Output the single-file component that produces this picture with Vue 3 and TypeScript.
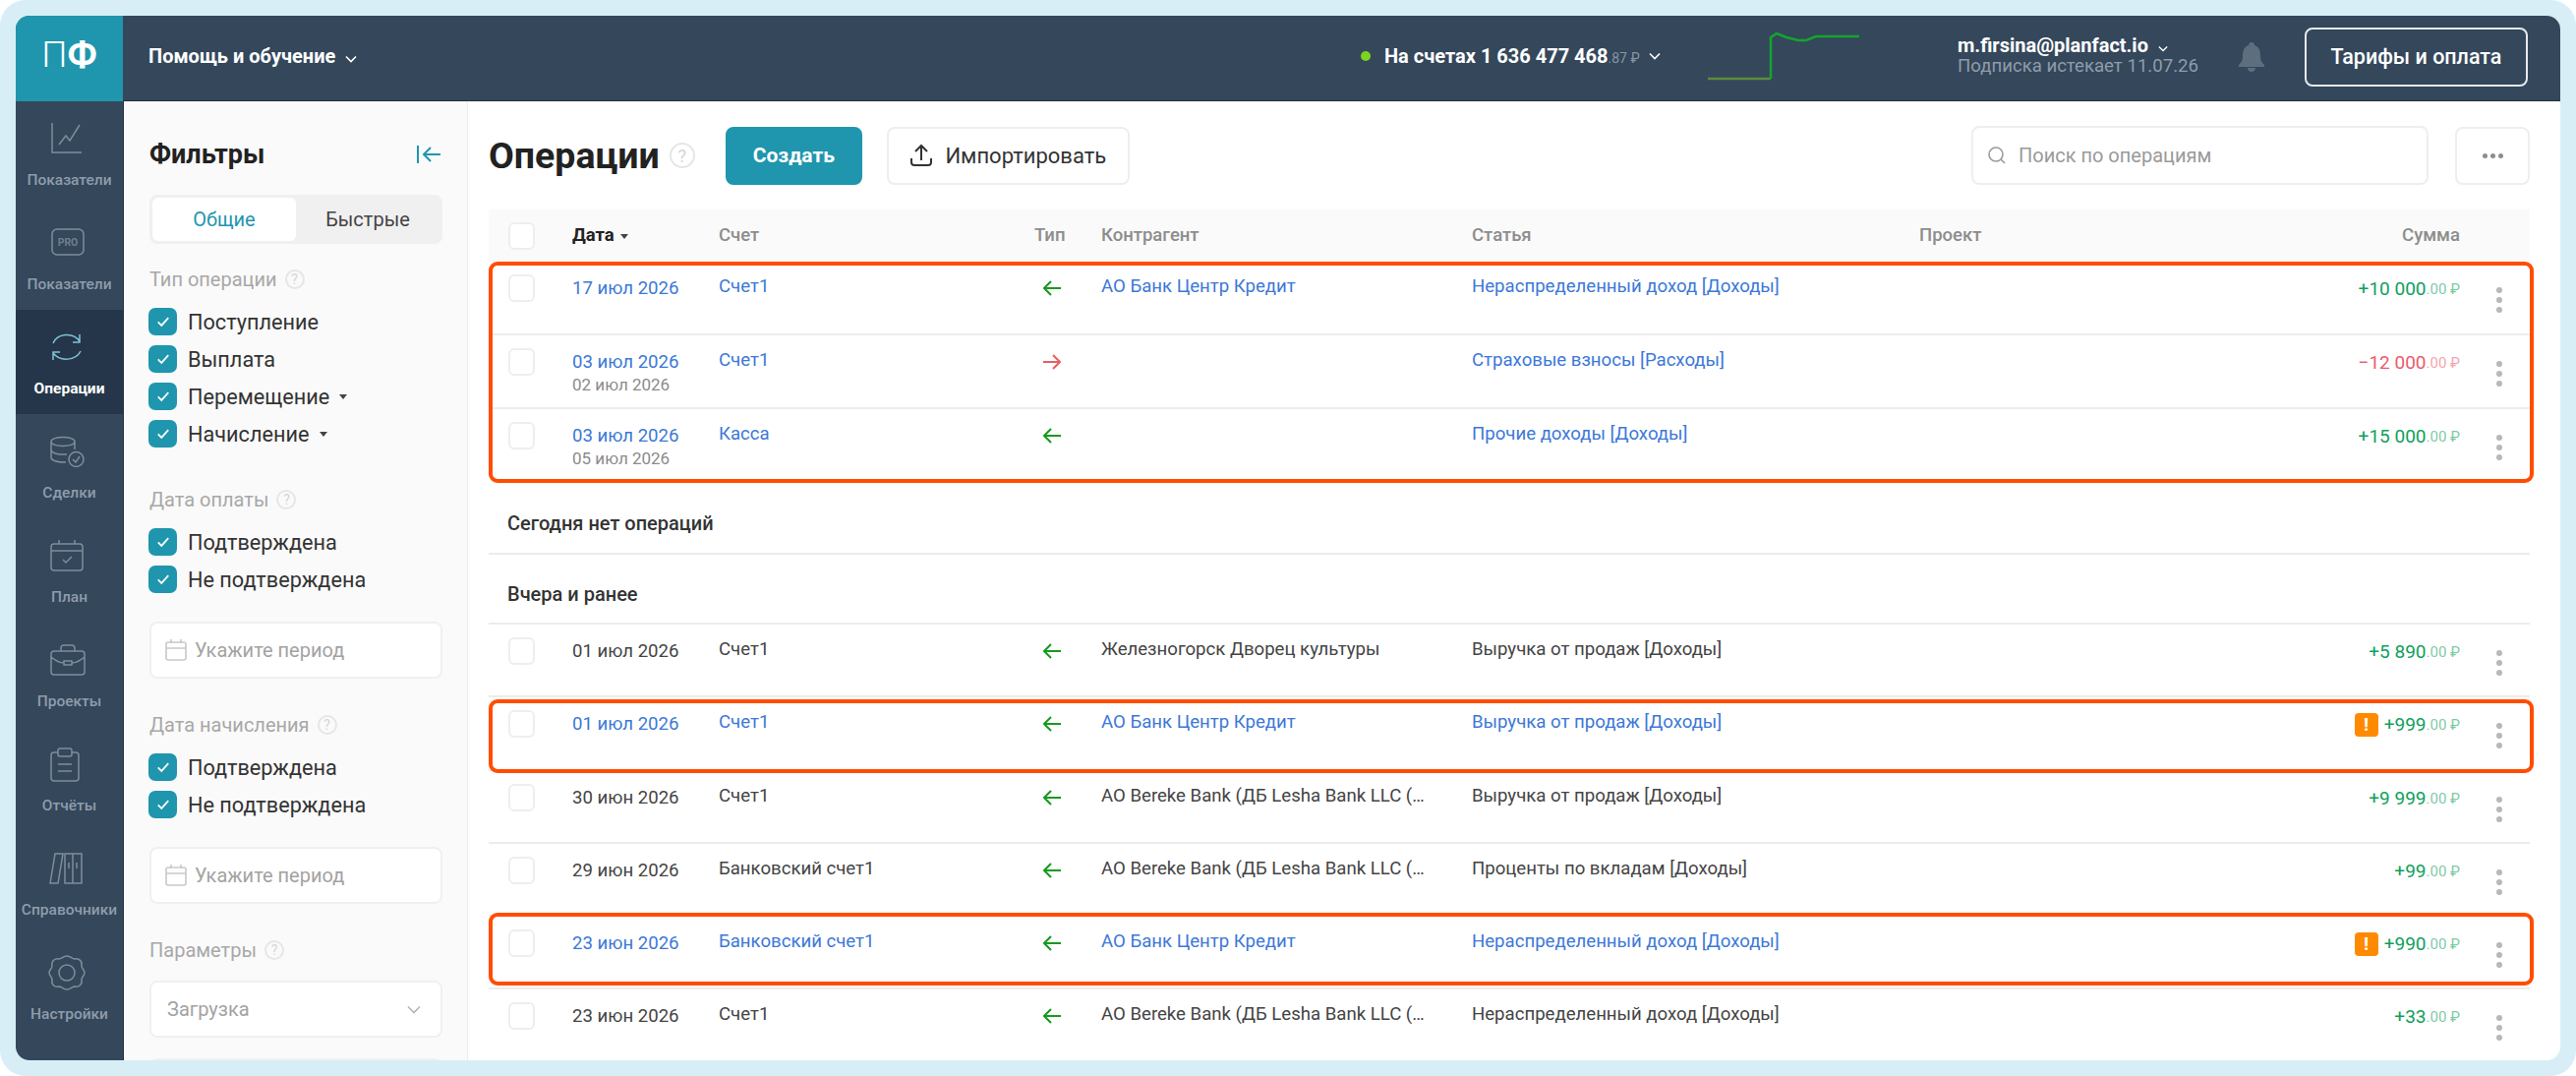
<script setup lang="ts">
interface NavItem {
  label: string
  d: string
  active?: boolean
  pro?: boolean
}

interface Row {
  date: string
  paid?: string
  account: string
  out?: boolean
  party?: string
  article: string
  sum: string
  warn?: boolean
  link?: boolean
}

const nav: NavItem[] = [
  { label: 'Показатели', d: 'M3 2V32H33M10 24L17 15L21 20L31 4' },
  { label: 'Показатели', d: 'M8 4H30A5 5 0 0 1 35 9V25A5 5 0 0 1 30 30H8A5 5 0 0 1 3 25V9A5 5 0 0 1 8 4Z', pro: true },
  { label: 'Операции', d: 'M4 14C8 4 24 2 31 12M31 5V13H24M32 22C27 32 11 33 4 24M4 31V23H11', active: true },
  { label: 'Сделки', d: 'M2 8C2 2 26 2 26 8C26 14 2 14 2 8ZM2 8V24C2 27 8 29 17 29M2 16C2 20 10 21.500 18 21M26 8V16M35 26A7.500 7.500 0 1 1 20 26A7.500 7.500 0 0 1 35 26ZM24 26L27 29L31 23' },
  { label: 'План', d: 'M5 6H31A3 3 0 0 1 34 9V30A3 3 0 0 1 31 33H5A3 3 0 0 1 2 30V9A3 3 0 0 1 5 6ZM2 13H34M10 2V6M26 2V6M14 22L17 25L23 19' },
  { label: 'Проекты', d: 'M5 9H33A3 3 0 0 1 36 12V30A3 3 0 0 1 33 33H5A3 3 0 0 1 2 30V12A3 3 0 0 1 5 9ZM12 9V6A3 3 0 0 1 15 3H23A3 3 0 0 1 26 6V9M2 15C8 20 13 21 15 21M36 15C30 20 25 21 23 21M15 19H23V23H15Z' },
  { label: 'Отчёты', d: 'M9 6H5A3 3 0 0 0 2 9V32A3 3 0 0 0 5 35H27A3 3 0 0 0 30 32V9A3 3 0 0 0 27 6H23M11 2H21A2 2 0 0 1 23 4V8A2 2 0 0 1 21 10H11A2 2 0 0 1 9 8V4A2 2 0 0 1 11 2ZM9 18H23M9 25H23' },
  { label: 'Справочники', d: 'M6 3H14L9 33H1ZM16 3H24V33H16ZM24 3H33V33H24ZM20 12V18M28 12V18' },
  { label: 'Настройки', d: 'M18 1C22 1 23 4 26 4C31 3 34 7 33 11C33 14 36 15 36 18C36 21 33 22 33 25C34 30 30 33 26 32C23 32 22 35 18 35C14 35 13 32 10 32C5 33 2 30 3 25C3 22 0 21 0 18C0 15 3 14 3 11C2 6 6 3 10 4C13 4 14 1 18 1ZM26 18A8 8 0 1 1 10 18A8 8 0 0 1 26 18Z' },
]

const typeChecks = [
  { label: 'Поступление' },
  { label: 'Выплата' },
  { label: 'Перемещение', caret: true },
  { label: 'Начисление', caret: true },
]

const payChecks = ['Подтверждена', 'Не подтверждена']

const bankCentre = 'АО Банк Центр Кредит'
const bereke = 'АО Bereke Bank (ДБ Lesha Bank LLC (…'

const newRows: Row[] = [
  { date: '17 июл 2026', account: 'Счет1', party: bankCentre, article: 'Нераспределенный доход [Доходы]', sum: '+10 000', link: true },
  { date: '03 июл 2026', paid: '02 июл 2026', account: 'Счет1', out: true, article: 'Страховые взносы [Расходы]', sum: '−12 000', link: true },
  { date: '03 июл 2026', paid: '05 июл 2026', account: 'Касса', article: 'Прочие доходы [Доходы]', sum: '+15 000', link: true },
]

const oldRows: Row[] = [
  { date: '01 июл 2026', account: 'Счет1', party: 'Железногорск Дворец культуры', article: 'Выручка от продаж [Доходы]', sum: '+5 890' },
  { date: '01 июл 2026', account: 'Счет1', party: bankCentre, article: 'Выручка от продаж [Доходы]', sum: '+999', warn: true, link: true },
  { date: '30 июн 2026', account: 'Счет1', party: bereke, article: 'Выручка от продаж [Доходы]', sum: '+9 999' },
  { date: '29 июн 2026', account: 'Банковский счет1', party: bereke, article: 'Проценты по вкладам [Доходы]', sum: '+99' },
  { date: '23 июн 2026', account: 'Банковский счет1', party: bankCentre, article: 'Нераспределенный доход [Доходы]', sum: '+990', warn: true, link: true },
  { date: '23 июн 2026', account: 'Счет1', party: bereke, article: 'Нераспределенный доход [Доходы]', sum: '+33' },
]
</script>

<template>
  <div class="canvas">
    <div class="app">
      <header class="topbar">
        <div class="logo"><span class="logo-p">П</span><span class="logo-f">Ф</span></div>
        <div class="help">
          Помощь и обучение
          <svg class="chev" width="12" height="8" viewBox="0 0 12 8"><path d="M1 1.500L6 6.500L11 1.500" /></svg>
        </div>
        <div class="balance">
          <span class="dot"></span>
          <span class="balance-text">На счетах 1 636 477 468</span><span class="balance-cents">.87 ₽</span>
          <svg class="chev wide" width="12" height="8" viewBox="0 0 12 8"><path d="M1 1.500L6 6.500L11 1.500" /></svg>
        </div>
        <svg class="spark" width="156" height="52" viewBox="0 0 156 52" fill="none">
          <path d="M0 48H64" stroke="#5f8a3c" stroke-width="2.500" />
          <path d="M64 48V6L70 2L80 6L92 9L100 9L110 5H154" stroke="#12a52c" stroke-width="2.500" />
        </svg>
        <div class="user">
          <div class="user-mail">
            m.firsina@planfact.io
            <svg class="chev" width="10" height="7" viewBox="0 0 12 8"><path d="M1 1.500L6 6.500L11 1.500" /></svg>
          </div>
          <div class="user-sub">Подписка истекает 11.07.26</div>
        </div>
        <svg class="bell" width="26" height="30" viewBox="0 0 26 30">
          <path d="M13 0C15 0 16 1.500 16 3C21 5 22 9 22 14C22 19 24 21 26 23V25H0V23C2 21 4 19 4 14C4 9 5 5 10 3C10 1.500 11 0 13 0ZM9 26H17C17 28.500 15 30 13 30C11 30 9 28.500 9 26Z" />
        </svg>
        <button class="pay" type="button">Тарифы и оплата</button>
      </header>

      <div class="body">
        <nav class="sidebar">
          <div v-for="(item, i) in nav" :key="i" class="nav-item" :class="{ active: item.active }">
            <svg class="nav-icon" width="38" height="36" viewBox="-1 0 38 36" fill="none">
              <path :d="item.d" />
              <text v-if="item.pro" x="19" y="21" text-anchor="middle" class="pro">PRO</text>
            </svg>
            <span class="nav-label">{{ item.label }}</span>
          </div>
        </nav>

        <aside class="filters">
          <div class="filters-head">
            <h2>Фильтры</h2>
            <svg width="26" height="22" viewBox="0 0 26 22" fill="none" stroke="#1f96ad" stroke-width="2">
              <path d="M2 2V20M25 11H9M15 4L8 11L15 18" />
            </svg>
          </div>
          <div class="tabs">
            <div class="tab on">Общие</div>
            <div class="tab">Быстрые</div>
          </div>

          <div class="f-label first">Тип операции <span class="q">?</span></div>
          <div class="checks">
            <div v-for="c in typeChecks" :key="c.label" class="check">
              <span class="box"><svg width="14" height="12" viewBox="0 0 16 13"><path d="M2 7L6 11L14 2" /></svg></span>
              {{ c.label }}
              <i v-if="c.caret" class="caret"></i>
            </div>
          </div>

          <div class="f-label">Дата оплаты <span class="q">?</span></div>
          <div class="checks">
            <div v-for="c in payChecks" :key="c" class="check">
              <span class="box"><svg width="14" height="12" viewBox="0 0 16 13"><path d="M2 7L6 11L14 2" /></svg></span>
              {{ c }}
            </div>
          </div>
          <div class="field period">
            <svg width="22" height="22" viewBox="0 0 22 22" fill="none" stroke="#c9c9c9" stroke-width="1.600">
              <path d="M3 3H19A2 2 0 0 1 21 5V19A2 2 0 0 1 19 21H3A2 2 0 0 1 1 19V5A2 2 0 0 1 3 3ZM1 9H21M6 0V4M16 0V4" />
            </svg>
            Укажите период
          </div>

          <div class="f-label">Дата начисления <span class="q">?</span></div>
          <div class="checks">
            <div v-for="c in payChecks" :key="c" class="check">
              <span class="box"><svg width="14" height="12" viewBox="0 0 16 13"><path d="M2 7L6 11L14 2" /></svg></span>
              {{ c }}
            </div>
          </div>
          <div class="field period">
            <svg width="22" height="22" viewBox="0 0 22 22" fill="none" stroke="#c9c9c9" stroke-width="1.600">
              <path d="M3 3H19A2 2 0 0 1 21 5V19A2 2 0 0 1 19 21H3A2 2 0 0 1 1 19V5A2 2 0 0 1 3 3ZM1 9H21M6 0V4M16 0V4" />
            </svg>
            Укажите период
          </div>

          <div class="f-label">Параметры <span class="q">?</span></div>
          <div class="field select">
            Загрузка
            <svg width="14" height="9" viewBox="0 0 14 9" fill="none" stroke="#b5b5b5" stroke-width="1.600"><path d="M1 1.500L7 7.500L13 1.500" /></svg>
          </div>
          <div class="field next"></div>
        </aside>

        <main class="main">
          <div class="toolbar">
            <h1>Операции</h1>
            <span class="q big">?</span>
            <button class="btn primary" type="button">Создать</button>
            <button class="btn" type="button">
              <svg width="24" height="24" viewBox="0 0 24 24" fill="none" stroke="#333" stroke-width="2">
                <path d="M12 17V3M6 8L12 2L18 8M2 15V19A3 3 0 0 0 5 22H19A3 3 0 0 0 22 19V15" />
              </svg>
              Импортировать
            </button>
            <div class="search">
              <svg width="20" height="20" viewBox="0 0 20 20" fill="none" stroke="#9a9a9a" stroke-width="1.600">
                <circle cx="9" cy="9" r="7" /><path d="M14 14L18 18" />
              </svg>
              Поиск по операциям
            </div>
            <button class="btn more" type="button"><i></i><i></i><i></i></button>
          </div>

          <div class="thead row-grid">
            <span class="cb"></span>
            <span class="th-date">Дата <i class="caret"></i></span>
            <span>Счет</span>
            <span>Тип</span>
            <span>Контрагент</span>
            <span>Статья</span>
            <span>Проект</span>
            <span class="right">Сумма</span>
            <span></span>
          </div>

          <div class="marked">
            <div v-for="(r, i) in newRows" :key="i" class="row row-grid" :class="{ link: r.link }">
              <span class="cb"></span>
              <span class="date">{{ r.date }}<small v-if="r.paid">{{ r.paid }}</small></span>
              <span class="acc">{{ r.account }}</span>
              <svg class="arrow" width="18" height="16" viewBox="0 0 18 16" fill="none" :class="{ out: r.out }">
                <path v-if="r.out" d="M0 8H16M10 1L17 8L10 15" />
                <path v-else d="M18 8H2M8 1L1 8L8 15" />
              </svg>
              <span class="party">{{ r.party }}</span>
              <span class="art">{{ r.article }}</span>
              <span></span>
              <span class="sum" :class="{ minus: r.out }">{{ r.sum }}<small>.00 ₽</small></span>
              <span class="dots"><i></i><i></i><i></i></span>
            </div>
          </div>

          <div class="group">Сегодня нет операций</div>
          <div class="group second">Вчера и ранее</div>

          <div
            v-for="(r, i) in oldRows"
            :key="i"
            class="row old row-grid"
            :class="{ link: r.link, marked: r.link, 'mark-low': i === 1, 'mark-high': i === 4 }"
          >
            <span class="cb"></span>
            <span class="date">{{ r.date }}</span>
            <span class="acc">{{ r.account }}</span>
            <svg class="arrow" width="18" height="16" viewBox="0 0 18 16" fill="none">
              <path d="M18 8H2M8 1L1 8L8 15" />
            </svg>
            <span class="party">{{ r.party }}</span>
            <span class="art">{{ r.article }}</span>
            <span></span>
            <span class="sum">
              <b v-if="r.warn" class="warn">!</b>{{ r.sum }}<small>.00 ₽</small>
            </span>
            <span class="dots"><i></i><i></i><i></i></span>
          </div>
        </main>
      </div>
    </div>
  </div>
</template>

<style scoped>
.canvas {
  box-sizing: border-box;
  width: 2620px;
  height: 1094px;
  padding: 16px;
  background: #d8eef6;
  border-radius: 26px;
  font-family: Roboto, "Liberation Sans", sans-serif;
  color: #333;
}

.app {
  display: flex;
  flex-direction: column;
  height: 1062px;
  background: #fff;
  border-radius: 14px;
  overflow: hidden;
}

.topbar {
  display: flex;
  align-items: center;
  flex: none;
  height: 86px;
  background: #34475b;
  border-bottom: 1px solid #24313f;
  color: #fff;
}

.logo {
  display: flex;
  align-items: center;
  justify-content: center;
  width: 109px;
  height: 87px;
  margin-right: 26px;
  padding-bottom: 8px;
  box-sizing: border-box;
  background: #1f96ad;
  font-size: 37px;
}

.logo-p {
  font-weight: 300;
}

.logo-f {
  font-weight: 700;
}

.chev {
  fill: none;
  stroke: currentColor;
  stroke-width: 1.600;
  margin-left: 5px;
}

.chev.wide {
  margin-left: 9px;
}

.help {
  width: 1236px;
  font-size: 20px;
  font-weight: 700;
  margin-top: -5px;
}

.balance {
  display: flex;
  align-items: center;
  width: 344px;
  font-size: 20px;
  font-weight: 700;
  margin-top: -5px;
  margin-left: -3px;
}

.dot {
  width: 10px;
  height: 10px;
  border-radius: 50%;
  background: #7ed321;
  margin-right: 14px;
}

.balance-cents {
  font-size: 14px;
  font-weight: 400;
  color: #8796a4;
  margin-top: 4px;
}

.spark {
  flex: none;
  width: 156px;
  margin-right: 98px;
  margin-left: 9px;
  margin-top: -2px;
}

.user {
  width: 286px;
  margin-top: -4px;
}

.user-mail {
  font-size: 20px;
  font-weight: 700;
  line-height: 21px;
}

.user-sub {
  font-size: 18.600px;
  line-height: 21px;
  color: #8f9cab;
}

.bell {
  flex: none;
  fill: #5d6e7f;
  margin-right: 41px;
  margin-top: -3px;
}

.pay {
  width: 227px;
  height: 60px;
  margin-top: -3px;
  background: transparent;
  border: 2px solid #e7e9eb;
  border-radius: 8px;
  color: #fff;
  font: 500 21.500px Roboto, sans-serif;
}

.body {
  display: flex;
  flex: 1;
  min-height: 0;
}

.sidebar {
  flex: none;
  width: 109px;
  background: #34475b;
  border-right: 1px solid #24313f;
}

.nav-item {
  display: flex;
  flex-direction: column;
  align-items: center;
  box-sizing: border-box;
  height: 106px;
  padding-top: 20px;
}

.nav-icon {
  stroke: #7f8d9a;
  stroke-width: 1.500;
  margin-left: -6px;
}

.nav-label {
  margin-top: 14px;
  font-size: 15.500px;
  line-height: 20px;
  font-weight: 500;
  color: #8f9cab;
  white-space: nowrap;
}

.pro {
  font: 700 10.500px Roboto, sans-serif;
  fill: #6f7e8d;
  stroke: none;
}

.nav-item.active {
  background: #26364a;
}

.nav-item.active .nav-icon {
  stroke: #7fc4d6;
}

.nav-item.active .nav-label {
  color: #fff;
  font-weight: 700;
}

.filters {
  flex: none;
  box-sizing: border-box;
  width: 350px;
  padding: 0 26px;
  background: #fafafa;
  border-right: 1px solid #ececec;
  overflow: hidden;
}

.filters-head {
  display: flex;
  align-items: center;
  justify-content: space-between;
  height: 40px;
  margin-top: 34px;
}

.filters-head h2 {
  margin: 0;
  font-size: 27px;
  font-weight: 700;
  color: #222;
}

.tabs {
  display: flex;
  width: 298px;
  height: 50px;
  margin-top: 21px;
  padding: 3px;
  box-sizing: border-box;
  background: #f0f0f0;
  border-radius: 8px;
}

.tab {
  display: flex;
  flex: 1;
  align-items: center;
  justify-content: center;
  font-size: 20px;
  color: #444;
  border-radius: 6px;
}

.tab.on {
  background: #fff;
  color: #1f96ad;
}

.f-label {
  display: flex;
  align-items: center;
  gap: 8px;
  height: 24px;
  margin-top: 41px;
  font-size: 20px;
  color: #a8a8a8;
}

.f-label.first {
  margin-top: 24px;
}

.q {
  display: inline-flex;
  align-items: center;
  justify-content: center;
  width: 20px;
  height: 20px;
  border: 2px solid #e6e6e6;
  border-radius: 50%;
  font-size: 14px;
  color: #d5d5d5;
  box-sizing: border-box;
}

.checks {
  display: flex;
  flex-direction: column;
  gap: 10px;
  margin-top: 17px;
}

.check {
  display: flex;
  align-items: center;
  height: 28px;
  font-size: 21.700px;
  color: #333;
}

.box {
  display: flex;
  align-items: center;
  justify-content: center;
  width: 29px;
  height: 28px;
  margin: 0 11px 0 -1px;
  background: #1f96ad;
  border-radius: 7px;
}

.box path {
  fill: none;
  stroke: #fff;
  stroke-width: 2;
}

.caret {
  display: inline-block;
  width: 0;
  height: 0;
  margin-left: 10px;
  border: 4px solid transparent;
  border-top: 5px solid #444;
  border-bottom: 0;
}

.field {
  display: flex;
  align-items: center;
  box-sizing: border-box;
  width: 298px;
  height: 58px;
  background: #fff;
  border: 2px solid #f0f0f3;
  border-radius: 8px;
  font-size: 20px;
  color: #a3a3a3;
}

.period {
  gap: 8px;
  margin-top: 29px;
  padding-left: 14px;
}

.period + .f-label {
  margin-top: 35px;
}

.select {
  justify-content: space-between;
  margin-top: 19px;
  padding: 0 20px 0 16px;
}

.next {
  margin-top: 21px;
}

.main {
  flex: 1;
  min-width: 0;
  padding: 0 31px 0 21px;
  overflow: hidden;
}

.toolbar {
  display: flex;
  align-items: center;
  height: 60px;
  margin-top: 25px;
}

.toolbar h1 {
  margin: 0 10px 0 0;
  font-size: 37.500px;
  font-weight: 700;
  color: #222;
}

.q.big {
  width: 26px;
  height: 26px;
  font-size: 18px;
  margin-right: 31px;
}

.btn {
  display: flex;
  align-items: center;
  justify-content: center;
  gap: 12px;
  box-sizing: border-box;
  width: 247px;
  height: 59px;
  margin-left: 25px;
  background: #fff;
  border: 2px solid #eeeef2;
  border-radius: 8px;
  font: 400 22px Roboto, sans-serif;
  color: #333;
}

.btn.primary {
  width: 139px;
  margin-left: 0;
  background: #1f96ad;
  border-color: #1f96ad;
  color: #fff;
  font-weight: 700;
  font-size: 21px;
}

.search {
  display: flex;
  align-items: center;
  gap: 12px;
  box-sizing: border-box;
  width: 465px;
  height: 60px;
  margin-left: auto;
  padding-left: 14px;
  border: 2px solid #eeeef2;
  border-radius: 8px;
  font-size: 20px;
  color: #9a9a9a;
}

.btn.more {
  gap: 3px;
  width: 76px;
  margin-left: 27px;
}

.btn.more i {
  width: 5px;
  height: 5px;
  border-radius: 50%;
  background: #8d8d8d;
}

.row-grid {
  display: grid;
  grid-template-columns: 65px 149px 321px 68px 377px 455px 300px 1fr 71px;
  padding-left: 20px;
}

.thead {
  align-items: center;
  height: 53px;
  margin-top: 25px;
  background: #fafafa;
  font-size: 18.500px;
  font-weight: 500;
  color: #8d8d8d;
}

.thead > span:not(.cb) {
  margin-top: -2px;
}

.th-date {
  color: #222;
  font-weight: 700;
}

.th-date .caret {
  margin-left: 2px;
  vertical-align: 2px;
}

.right {
  text-align: right;
}

.cb {
  box-sizing: border-box;
  width: 27px;
  height: 28px;
  background: #fff;
  border: 2px solid #eeeef2;
  border-radius: 6px;
}

.row {
  position: relative;
  box-sizing: border-box;
  height: 75px;
  padding-top: 13px;
  border-bottom: 2px solid #ececec;
  font-size: 18.600px;
  line-height: 24px;
  color: #444;
}

.row.old {
  height: 74.300px;
}

.row:last-child {
  border-bottom: 0;
}

.row > span {
  min-width: 0;
}

.date {
  padding-top: 2px;
}

.date small {
  display: block;
  font-size: 17px;
  line-height: 23px;
  color: #8b8b8b;
}

.party {
  white-space: nowrap;
}

.row.link .date,
.row.link .acc,
.row.link .party,
.row.link .art {
  color: #3c78d8;
}

.arrow {
  margin: 6px 0 0 9px;
  stroke: #169a1f;
  stroke-width: 2;
}

.arrow.out {
  stroke: #e9605f;
}

.sum {
  display: flex;
  align-items: center;
  justify-content: flex-end;
  height: 24px;
  margin-top: 3px;
  font-size: 19px;
  color: #0fa05c;
  white-space: pre;
}

.sum small {
  font-size: 15px;
  opacity: 0.55;
}

.sum.minus {
  color: #ec5a6c;
}

.warn {
  display: flex;
  flex: none;
  align-items: center;
  justify-content: center;
  width: 24px;
  height: 24px;
  margin-right: 6px;
  background: #ff8a00;
  border-radius: 4px;
  color: #fff;
  font-size: 19px;
}

.dots {
  display: flex;
  flex-direction: column;
  align-items: center;
  gap: 4px;
  width: 6px;
  margin: 13px 0 0 37px;
}

.dots i {
  width: 6px;
  height: 6px;
  border-radius: 50%;
  background: #b8b8b8;
}

.group {
  display: flex;
  align-items: center;
  box-sizing: border-box;
  height: 73px;
  padding: 10px 0 0 19px;
  border-bottom: 2px solid #ececec;
  font-size: 20px;
  font-weight: 500;
  color: #333;
}

.group.second {
  height: 71px;
}

.marked {
  position: relative;
}

.marked::after {
  content: "";
  position: absolute;
  inset: 0 -4px 0 0;
  border: 4px solid #ff4d00;
  border-radius: 9px;
  pointer-events: none;
}

.mark-low::after {
  inset: 2px -4px -4px 0;
}

.mark-high::after {
  inset: -4px -4px 2px 0;
}
</style>

<style>
html,
body {
  margin: 0;
  background: #fff;
}
</style>
